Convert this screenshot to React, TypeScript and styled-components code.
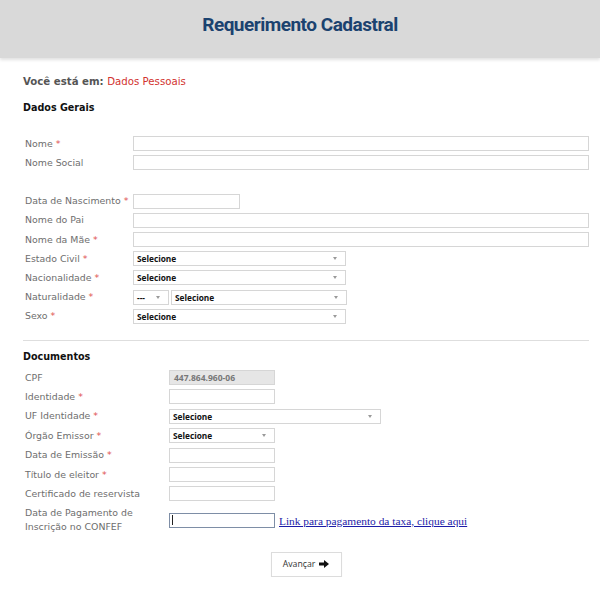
import React, { FunctionComponent } from 'react';
import styled, { createGlobalStyle } from 'styled-components';

const GlobalStyle = createGlobalStyle`
  body {
    margin: 0;
    background: #ffffff;
    font-family: 'DejaVu Sans', Verdana, sans-serif;
  }
`;

const Header = styled.header`
  height: 46px;
  padding-top: 12px;
  background: #d9d9d9;
  box-shadow: 0 2px 3px rgba(0, 0, 0, 0.12);
  text-align: center;
`;

const Title = styled.h1`
  margin: 0;
  font-family: Roboto, 'Liberation Sans', Arial, sans-serif;
  font-size: 19px;
  line-height: 25px;
  font-weight: 700;
  letter-spacing: -0.5px;
  color: #1b426f;
`;

const Main = styled.main`
  padding: 0 11px 0 23px;
`;

const Breadcrumb = styled.p`
  margin: 17px 0 0;
  font-size: 10.2px;
  line-height: 14px;
  font-weight: 700;
  color: #555555;
`;

const Current = styled.span`
  font-weight: 400;
  color: #d2332f;
`;

const SectionTitle = styled.h2<{ $top: number }>`
  margin: ${(p) => p.$top}px 0 0;
  font-size: 9.6px;
  line-height: 14px;
  font-weight: 700;
  color: #111111;
`;

const Fields = styled.div<{ $label: number; $top: number; $row: number }>`
  display: grid;
  grid-template-columns: ${(p) => p.$label}px 1fr;
  grid-auto-rows: minmax(${(p) => p.$row}px, auto);
  align-items: center;
  margin-top: ${(p) => p.$top}px;
`;

const Label = styled.label`
  padding-left: 2px;
  font-size: 9.4px;
  line-height: 14px;
  color: #6e6e6e;
`;

const Star = styled.span`
  margin-left: 3px;
  color: #e05252;
`;

const Spacer = styled.div`
  grid-column: 1 / -1;
  height: 19px;
`;

const Control = styled.div`
  display: flex;
  align-items: center;
  gap: 2px;
`;

const Input = styled.div<{ $w?: number; $disabled?: boolean; $focused?: boolean }>`
  box-sizing: border-box;
  width: ${(p) => (p.$w ? `${p.$w}px` : '100%')};
  height: 15px;
  padding-left: ${(p) => (p.$focused ? 2 : 4)}px;
  border: 1px solid ${(p) => (p.$focused ? '#7e8ea6' : '#d6d6d6')};
  background: ${(p) => (p.$disabled ? '#e6e6e6' : '#ffffff')};
  font-family: 'Open Sans', 'Liberation Sans', sans-serif;
  font-size: 8.5px;
  font-weight: 700;
  line-height: 13px;
  color: #777777;
`;

const Caret = styled.span`
  display: inline-block;
  width: 1px;
  height: 10px;
  margin-top: 1px;
  background: #222222;
  vertical-align: top;
`;

const Select = styled.div<{ $w: number }>`
  box-sizing: border-box;
  display: flex;
  align-items: center;
  justify-content: space-between;
  width: ${(p) => p.$w}px;
  height: 15px;
  padding: 0 8px 0 3px;
  border: 1px solid #d6d6d6;
  background: #ffffff;
  font-family: 'Open Sans', 'Liberation Sans', sans-serif;
  font-size: 8.3px;
  font-weight: 700;
  color: #111111;
`;

const Arrow = styled.span`
  width: 0;
  height: 0;
  border-left: 2.5px solid transparent;
  border-right: 2.5px solid transparent;
  border-top: 3px solid #9a9a9a;
`;

const Divider = styled.hr`
  margin: 14px 0 0;
  border: 0;
  border-top: 1px solid #dedede;
`;

const PayLink = styled.a`
  margin-left: 2px;
  font-family: 'Liberation Serif', 'Times New Roman', serif;
  font-size: 11.4px;
  color: #1c1ca8;
  text-decoration: underline;
`;

const TwoLineLabel = styled(Label)`
  padding-top: 2px;
  padding-bottom: 4px;
`;

const Actions = styled.div`
  display: flex;
  justify-content: center;
  margin-top: 14px;
`;

const Button = styled.button`
  display: flex;
  align-items: center;
  justify-content: center;
  gap: 4px;
  width: 71px;
  height: 25px;
  border: 1px solid #dcdcdc;
  background: #ffffff;
  box-shadow: 0 1px 1px rgba(0, 0, 0, 0.05);
  font-family: 'Open Sans', 'Liberation Sans', sans-serif;
  font-size: 8.7px;
  color: #333333;
`;

const Req: FunctionComponent = () => <Star>*</Star>;

const Dropdown: FunctionComponent<{ w: number; text: string }> = ({ w, text }) => (
  <Select $w={w}>
    <span>{text}</span>
    <Arrow />
  </Select>
);

const ArrowIcon = () => (
  <svg width="10" height="8" viewBox="0 0 10 8" aria-hidden="true">
    <path d="M0 2.6h5V0l5 4-5 4V5.4H0z" fill="#111" />
  </svg>
);

const App: FunctionComponent = () => (
  <>
    <GlobalStyle />
    <Header>
      <Title>Requerimento Cadastral</Title>
    </Header>
    <Main>
      <Breadcrumb>
        Você está em: <Current>Dados Pessoais</Current>
      </Breadcrumb>
      <SectionTitle $top={12}>Dados Gerais</SectionTitle>

      <Fields $label={110} $top={19} $row={19.2}>
        <Label>Nome<Req /></Label>
        <Control><Input /></Control>
        <Label>Nome Social</Label>
        <Control><Input /></Control>
        <Spacer />
        <Label>Data de Nascimento<Req /></Label>
        <Control><Input $w={107} /></Control>
        <Label>Nome do Pai</Label>
        <Control><Input /></Control>
        <Label>Nome da Mãe<Req /></Label>
        <Control><Input /></Control>
        <Label>Estado Civil<Req /></Label>
        <Control><Dropdown w={213} text="Selecione" /></Control>
        <Label>Nacionalidade<Req /></Label>
        <Control><Dropdown w={213} text="Selecione" /></Control>
        <Label>Naturalidade<Req /></Label>
        <Control>
          <Dropdown w={36} text="---" />
          <Dropdown w={176} text="Selecione" />
        </Control>
        <Label>Sexo<Req /></Label>
        <Control><Dropdown w={213} text="Selecione" /></Control>
      </Fields>

      <Divider />
      <SectionTitle $top={9}>Documentos</SectionTitle>

      <Fields $label={146} $top={4} $row={19.4}>
        <Label>CPF</Label>
        <Control><Input $w={106} $disabled>447.864.960-06</Input></Control>
        <Label>Identidade<Req /></Label>
        <Control><Input $w={106} /></Control>
        <Label>UF Identidade<Req /></Label>
        <Control><Dropdown w={212} text="Selecione" /></Control>
        <Label>Órgão Emissor<Req /></Label>
        <Control><Dropdown w={106} text="Selecione" /></Control>
        <Label>Data de Emissão<Req /></Label>
        <Control><Input $w={106} /></Control>
        <Label>Título de eleitor<Req /></Label>
        <Control><Input $w={106} /></Control>
        <Label>Certificado de reservista</Label>
        <Control><Input $w={106} /></Control>
        <TwoLineLabel>
          Data de Pagamento de
          <br />
          Inscrição no CONFEF
        </TwoLineLabel>
        <Control>
          <Input $w={106} $focused><Caret /></Input>
          <PayLink href="#">Link para pagamento da taxa, clique aqui</PayLink>
        </Control>
      </Fields>

      <Actions>
        <Button type="button">
          Avançar
          <ArrowIcon />
        </Button>
      </Actions>
    </Main>
  </>
);

export default App;
